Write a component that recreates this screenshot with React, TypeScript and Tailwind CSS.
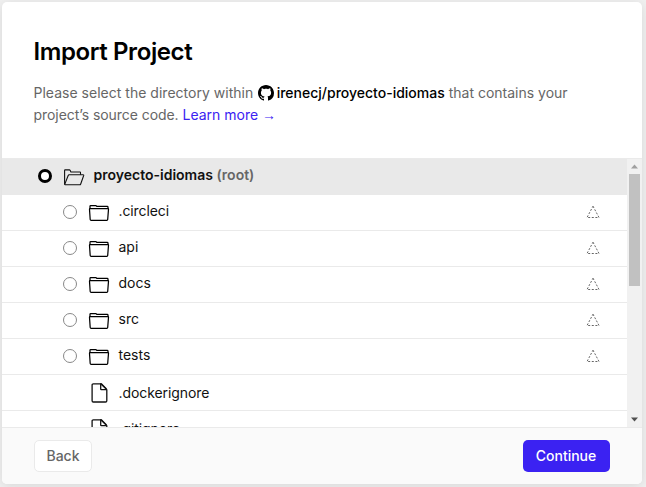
import React from "react";

const directories = [".circleci", "api", "docs", "src", "tests"];
const files = [".dockerignore", ".gitignore"];

function GitHubMark() {
  return (
    <svg className="relative top-[3px] mr-[2.5px] ml-[1px] inline-block h-4 w-4 align-baseline" viewBox="0 0 16 16" fill="#000">
      <path d="M8 0C3.58 0 0 3.58 0 8c0 3.54 2.29 6.53 5.47 7.59.4.07.55-.17.55-.38 0-.19-.01-.82-.01-1.49-2.01.37-2.53-.49-2.69-.94-.09-.23-.48-.94-.82-1.13-.28-.15-.68-.52-.01-.53.63-.01 1.08.58 1.23.82.72 1.21 1.87.87 2.33.66.07-.52.28-.87.51-1.07-1.78-.2-3.64-.89-3.64-3.95 0-.87.31-1.59.82-2.15-.08-.2-.36-1.02.08-2.12 0 0 .67-.21 2.2.82.64-.18 1.32-.27 2-.27s1.36.09 2 .27c1.53-1.04 2.2-.82 2.2-.82.44 1.1.16 1.92.08 2.12.51.56.82 1.27.82 2.15 0 3.07-1.87 3.75-3.65 3.95.29.25.54.73.54 1.48 0 1.07-.01 1.93-.01 2.2 0 .21.15.46.55.38A8.01 8.01 0 0 0 16 8c0-4.42-3.58-8-8-8Z" />
    </svg>
  );
}

function OpenFolder() {
  return (
    <svg className="block h-[18px] w-[22px]" viewBox="0 0 22 18" fill="none" stroke="#111" strokeWidth="1.1" strokeLinejoin="round">
      <path d="M1.6 15.5V1.4q0-.5.5-.5h4.3q.5 0 .8.7l.7 1.4h9q.6 0 .6.6v2.2" />
      <path d="M1.6 15.6 5.2 6.5q.3-.7 1-.7h14q.7 0 .5.7l-3 8.5q-.3.8-1 .8H2.2q-.6 0-.6-.6" />
    </svg>
  );
}

function Folder() {
  return (
    <svg className="block h-[18px] w-[22px]" viewBox="0 0 22 18" fill="none" stroke="#000" strokeWidth="1.25" strokeLinejoin="round">
      <path d="M2 4.9V2.3q0-.7.7-.7h5q.6 0 .9.5l.2.3h10.4q.8 0 .8.8v1.7" />
      <path d="M1.5 5.3q0-.6.6-.6h17.8q.6 0 .6.6l-.8 10.2q-.1.9-.9.9H3.1q-.8 0-.9-.9Z" />
    </svg>
  );
}

function File() {
  return (
    <svg className="block h-5 w-[18px]" viewBox="0 0 18 20" fill="none" stroke="#111" strokeWidth="1.3" strokeLinejoin="round">
      <path d="M10.8.8H3.3Q2.1.8 2.1 2v15.8q0 1.2 1.2 1.2h12.3q1.2 0 1.2-1.2V6.6Z" />
      <path d="M10.7.9v5.2q0 .6.6.6h5.4M10.1.8h1.2l5.2 5.2" />
    </svg>
  );
}

function Triangle() {
  return (
    <svg className="block h-[14px] w-[14px]" viewBox="0 0 14 14" fill="none" stroke="#666" strokeWidth="1" strokeDasharray="2 1.6">
      <path d="M7 1.2 13 12.5H1Z" />
    </svg>
  );
}

export default function App() {
  return (
    <div className="h-[487px] w-[646px] overflow-hidden bg-[#f0f0f0] pt-[2px] pl-[2px] font-['Inter',sans-serif] text-black">
      <main className="flex h-[482px] w-[640px] flex-col overflow-hidden rounded-[5px] bg-white shadow-[0_2px_12px_rgba(0,0,0,0.1)]">
        <header className="h-[156px] shrink-0 pl-[31.5px] pt-[34px]">
          <h1 className="text-[24px] leading-8 font-semibold tracking-[-0.4px]">Import Project</h1>
          <p className="mt-[14px] w-[560px] text-[14px] leading-[22px] text-[#666]">
            <span className="tracking-[0.015px]">Please select the directory within </span>
            <GitHubMark /><b className="font-medium text-black">irenecj/proyecto-idiomas</b> that contains your<br />
            <span className="tracking-[-0.06px]">project’s source code. </span>
            <a href="#" className="text-[#3b22f2]">Learn more <span className="font-['Liberation_Sans',sans-serif]">→</span></a>
          </p>
        </header>
        <section className="flex h-[269px] shrink-0 border-t border-[#eaeaea]">
          <div className="h-[268px] w-[625px] overflow-hidden text-[14px] leading-5 text-[#111]">
            <div className="flex h-9 items-center bg-[#e9e9e9] pl-9">
              <span className="mb-[2px] h-[14px] w-[14px] rounded-full border-[3px] border-black bg-white" />
              <span className="mt-[1px] ml-[10.5px]"><OpenFolder /></span>
              <span className="mb-[4px] ml-[9px] font-semibold">proyecto-idiomas <span className="text-[#666]">(root)</span></span>
            </div>
            {directories.map((name) => (
              <div key={name} className="flex h-9 items-center border-b border-[#eaeaea] pl-[61px]">
                <span className="mb-[2px] h-[14px] w-[14px] rounded-full border border-[#888] bg-white" />
                <span className="mt-[1px] ml-[11px]"><Folder /></span>
                <span className={name.startsWith(".") ? "mb-[3px] ml-[8.5px] flex-1 tracking-[-0.1px]" : "mb-[3px] ml-[8.5px] flex-1"}>{name}</span>
                <span className="mr-[27px] mb-[2px]"><Triangle /></span>
              </div>
            ))}
            {files.map((name) => (
              <div key={name} className="flex h-9 items-center border-b border-[#eaeaea] pl-[88px]">
                <File />
                <span className="ml-[10.5px] tracking-[-0.08px]">{name}</span>
              </div>
            ))}
          </div>
          <div className="flex h-[268px] w-[15px] flex-col items-center bg-[#f1f1f1]">
            <svg className="h-[15px] w-[15px] shrink-0" viewBox="0 0 15 15"><path d="M7.5 5.5 11 9.5H4Z" fill="#a0a0a0" /></svg>
            <div className="h-[112px] w-[11px] bg-[#c1c1c1]" />
            <svg className="mt-auto h-[15px] w-[15px] shrink-0" viewBox="0 0 15 15"><path d="M4 5.5h7L7.5 9.5Z" fill="#505050" /></svg>
          </div>
        </section>
        <footer className="flex flex-1 items-start justify-between border-t border-[#eaeaea] bg-[#fafafa] px-8 pt-3">
          <button className="h-8 w-[58px] rounded-[5px] border border-[#eaeaea] bg-white pb-[2px] text-[14px] font-medium text-[#666]">Back</button>
          <button className="h-8 w-[87px] rounded-[5px] bg-[#3b22f2] pr-[1px] pb-[2px] text-[14px] font-medium text-white">Continue</button>
        </footer>
      </main>
    </div>
  );
}
